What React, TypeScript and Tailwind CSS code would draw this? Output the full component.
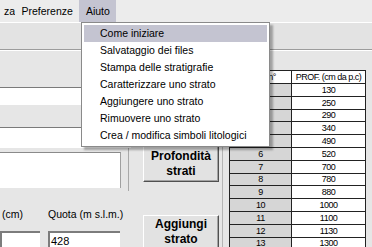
const menuItems = [
  "Come iniziare",
  "Salvataggio dei files",
  "Stampa delle stratigrafie",
  "Caratterizzare uno strato",
  "Aggiungere uno strato",
  "Rimuovere uno strato",
  "Crea / modifica simboli litologici",
];

const depths = [130, 250, 290, 340, 490, 520, 700, 780, 880, 1000, 1100, 1130, 1300];

function Field({ className, value }: { className: string; value?: string }) {
  return (
    <div
      className={`bg-white border-t-2 border-l-2 border-t-[#7c7c7c] border-l-[#7c7c7c] pl-[1px] text-[11px] leading-[16px] ${className}`}
    >
      {value}
    </div>
  );
}

export default function App() {
  return (
    <div className="relative w-[372px] h-[247px] overflow-hidden bg-[#e6e6e6] font-['Liberation_Sans',Arial,sans-serif] text-black">
      {/* menu bar */}
      <div className="flex h-[22px] bg-[#ececec] text-[10.5px] leading-[22px]">
        <div className="w-[15px] overflow-hidden text-right">za</div>
        <div className="px-[6.5px]">Preferenze</div>
        <div className="px-[6.5px] bg-[#c4c4d1]">Aiuto</div>
      </div>

      {/* toolbar strip */}
      <div className="h-[28px] border-t border-b border-t-white border-b-[#9c9c9c] bg-[#e3e3e3]" />
      <div className="h-px bg-white" />

      {/* form body */}
      <div className="flex">
        {/* left panel */}
        <div className="w-[131px] flex flex-col">
          <div className="mt-[36px] h-[18px] bg-white border-t border-t-[#7a7a7a]" />
          <div className="mt-[22px] h-[21px] bg-white border-t border-t-[#7a7a7a]" />
          <div className="w-[129px] border-r border-r-[#a9a9a9] pt-[4px] pb-[3px]">
            <div className="w-[121px] h-[36px] bg-white border-t border-r border-t-[#8a8a8a] border-r-[#a0a0a0]" />
          </div>
          <div className="mt-[17px] flex h-[12px] text-[10.5px] leading-[12px]">
            <span className="ml-[2px] w-[46px]">(cm)</span>
            <span>Quota (m s.l.m.)</span>
          </div>
          <div className="mt-[11px] flex gap-[8px]">
            <Field className="w-[40px] h-[20px]" />
            <Field className="w-[72px] h-[20px]" value="428" />
          </div>
        </div>

        {/* buttons column */}
        <div className="w-[91px] flex flex-col pl-[12px] text-[12px] font-bold leading-[15px]">
          <div className="mt-[95px] w-[76px] h-[36px] flex flex-col items-center justify-center bg-[#e2e2e2] border border-t-white border-l-white border-r-[#505050] border-b-[#505050] shadow-[inset_-1px_-1px_0_#a3a3a3]">
            <span>Profondità</span>
            <span>strati</span>
          </div>
          <div className="mt-[33px] w-[76px] h-[40px] pt-[1px] flex flex-col items-center bg-[#e2e2e2] border border-t-white border-l-white border-r-[#505050] border-b-[#505050] shadow-[inset_-1px_-1px_0_#a3a3a3]">
            <span>Aggiungi</span>
            <span>strato</span>
          </div>
        </div>

        {/* grid panel */}
        <div className="flex-1 h-[200px] border-l border-l-[#b4b4b4] pl-[6px] pt-[19px]">
          <div className="w-[137px] border-t border-l border-r border-[#222] text-[9px] tracking-[-0.5px] text-center">
            <div className="flex h-[13px] leading-[12px] border-b border-b-[#222] bg-white">
              <div className="w-[62px] border-r border-r-[#222]">Strato n°</div>
              <div className="flex-1">PROF. (cm da p.c)</div>
            </div>
            {depths.map((d, i) => (
              <div
                key={d}
                className={`flex border-b border-b-[#222] ${i % 5 === 2 ? "h-[12px] leading-[11px]" : "h-[13px] leading-[12px]"}`}
              >
                <div className="w-[62px] border-r border-r-[#222] bg-[#d6d6d6]">{i + 1}</div>
                <div className="flex-1 bg-white">{d}</div>
              </div>
            ))}
          </div>
        </div>
      </div>

      {/* open "Aiuto" menu */}
      <div className="absolute left-[81px] top-[22px] w-[189px] h-[125px] bg-white border border-[#8a8a8a] px-[2px] pt-[2px] shadow-[3px_3px_2px_rgba(0,0,0,0.3)] text-[10.5px] leading-[17px]">
        {menuItems.map((m, i) => (
          <div key={m} className={`h-[17px] pl-[16px] ${i === 0 ? "bg-[#c4c4d1]" : ""}`}>
            {m}
          </div>
        ))}
      </div>
    </div>
  );
}
